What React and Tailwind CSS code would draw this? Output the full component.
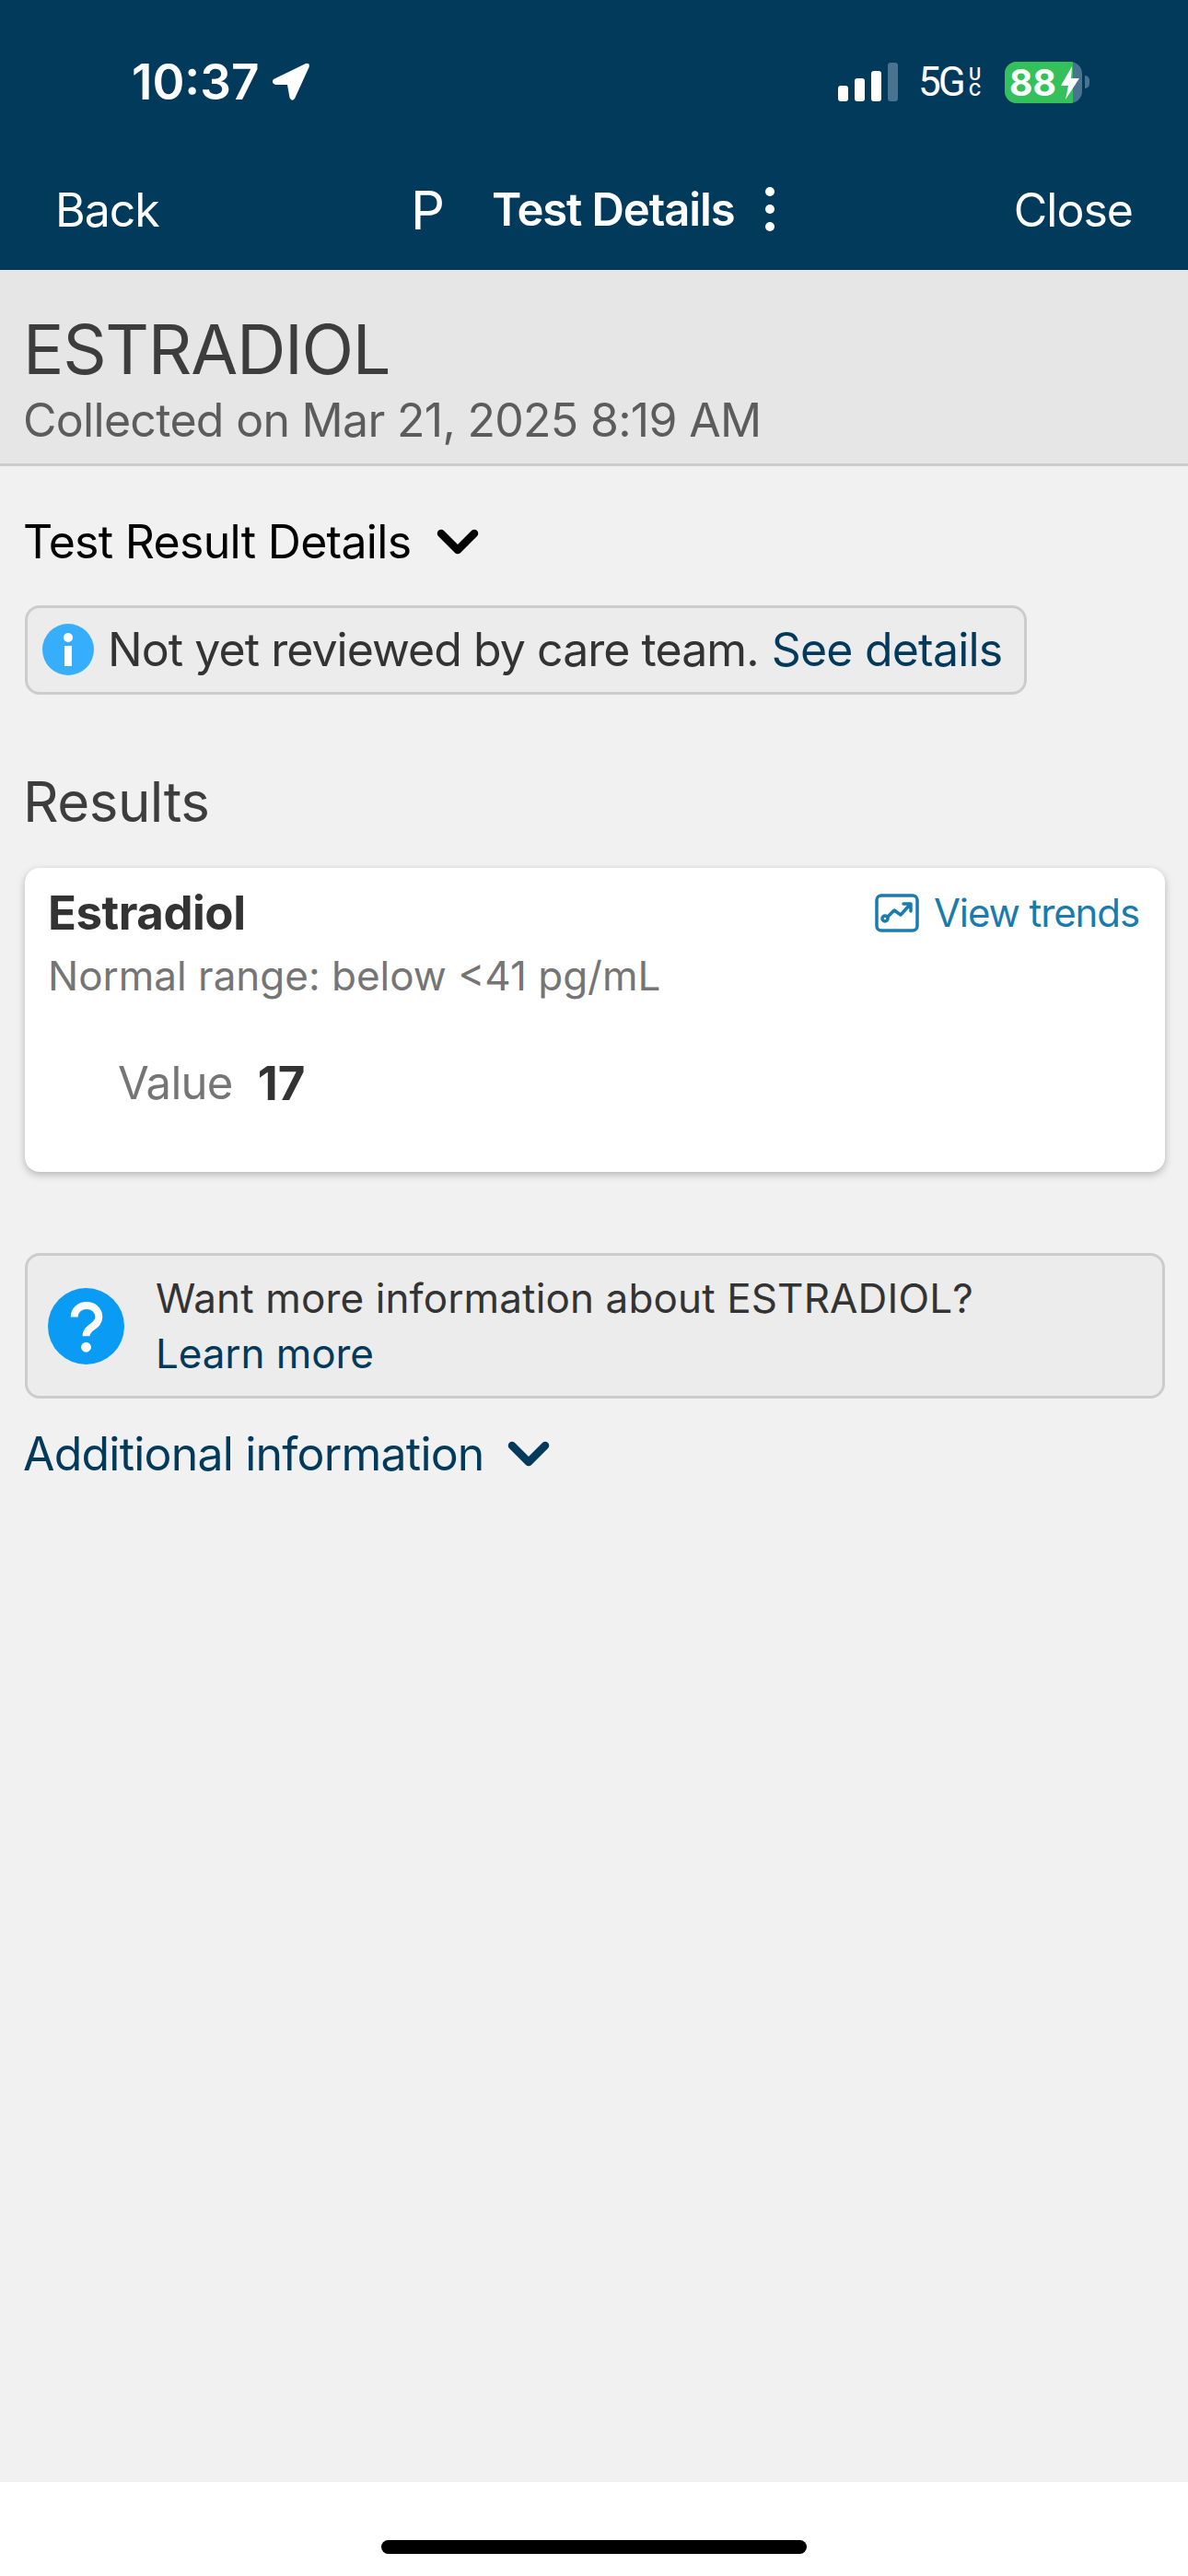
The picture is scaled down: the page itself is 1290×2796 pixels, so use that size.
import React from 'react';

const font = { fontFamily: 'Inter, "Noto Sans", sans-serif' };

const Chevron = ({ className }) => (
    <svg viewBox="0 0 46 28" className={className} fill="none" stroke="currentColor" strokeWidth="8.5" strokeLinecap="round" strokeLinejoin="round">
        <path d="M5 5 L23 23 L41 5" />
    </svg>
);

const StatusBar = () => (
    <div className="flex h-[178px] items-center pl-[143px] text-white">
        <span className="w-[152px] text-[53px] leading-none font-semibold">10:37</span>
        <svg viewBox="0 0 42 42" className="h-[42px] w-[42px]" fill="white">
            <path d="M2 18 L37 1 Q42 0 40.5 5 L25 39 Q22 43 19.500 38 L17 24 L4 24 Q-1 22 2 18 Z" />
        </svg>
        {/* signal */}
        <svg viewBox="0 0 66 42" className="ml-[573px] h-[42px] w-[66px]">
            <rect x="0" y="25" width="11" height="17" rx="3" fill="white" />
            <rect x="18" y="17" width="11" height="25" rx="3" fill="white" />
            <rect x="36" y="9" width="11" height="33" rx="3" fill="white" />
            <rect x="54" y="0" width="11" height="42" rx="3" fill="#4a7291" />
        </svg>
        <span className="ml-[21px] w-[55px] font-['Roboto'] text-[44px] leading-none font-normal tracking-[-3px]">5G</span>
        <span className="flex w-[39px] flex-col text-[18px] leading-[17px] font-semibold">
            <span>U</span>
            <span>C</span>
        </span>
        {/* battery */}
        <div className="relative flex h-[45px] w-[84px] overflow-hidden rounded-[13px] bg-[#4a7291]">
            <div className="h-full w-[74px] bg-[#34c15c]" />
            <span className="absolute top-[3px] left-[5px] text-[39px] leading-[39px] font-bold">88</span>
            <svg viewBox="0 0 20 36" className="absolute top-[5px] left-[61px] h-[36px] w-[20px]" fill="white">
                <path d="M12 0 L0 21 L8 21 L5 36 L20 13 L11 13 Z" />
            </svg>
        </div>
        <div className="ml-[3px] h-[14px] w-[5px] rounded-r-full bg-[#4a7291]" />
    </div>
);

const NavBar = () => (
    <div className="flex h-[115px] items-start pt-[20px] pr-[60px] pl-[60px] text-[50px] leading-[60px] tracking-[-1px] text-white">
        <span className="w-[386px]">Back</span>
        <span className="w-[88px] text-[58px]">P</span>
        <span className="text-[49px] font-semibold tracking-[-1.1px]">Test Details</span>
        <svg viewBox="0 0 14 50" className="mt-[4px] ml-[32px] h-[50px] w-[14px]" fill="white">
            <circle cx="7" cy="6" r="5" />
            <circle cx="7" cy="25" r="5" />
            <circle cx="7" cy="44" r="5" />
        </svg>
        <span className="ml-auto">Close</span>
    </div>
);

export default function App() {
    return (
        <div className="flex h-[2796px] w-[1290px] flex-col overflow-hidden bg-[#f1f1f1]" style={font}>
            <div className="bg-[#023a5c]">
                <StatusBar />
                <NavBar />
            </div>

            {/* Title band */}
            <div className="h-[213px] border-b-[3px] border-[#cccccc] bg-[#e6e6e6] px-[25px] pt-[42px]">
                <h1 className="text-[74px] leading-[88px] font-normal tracking-[-1.3px] text-[#3d3d3d]">ESTRADIOL</h1>
                <p className="mt-[3px] text-[50px] leading-[60px] tracking-[-0.7px] text-[#5c5c5c]">Collected on Mar 21, 2025 8:19 AM</p>
            </div>

            <div className="flex flex-1 flex-col px-[25px]">
                <div className="mt-[52px] flex items-center text-[50px] leading-[60px] tracking-[-0.7px] text-black">
                    Test Result Details
                    <Chevron className="ml-[28px] h-[28px] w-[46px]" />
                </div>

                <div className="mt-[39px] ml-[2px] flex h-[97px] w-[1088px] items-center rounded-[16px] border-[3px] border-[#cccccc] bg-[#ececec] pb-[2px] pl-[16px] text-[50px] leading-[60px] tracking-[-0.95px] whitespace-nowrap text-[#333333]">
                    <svg viewBox="0 0 56 56" className="h-[56px] w-[56px] shrink-0">
                        <circle cx="28" cy="28" r="28" fill="#36aefb" />
                        <circle cx="28" cy="15" r="5" fill="white" />
                        <rect x="24" y="24" width="8" height="22" fill="white" />
                    </svg>
                    <span className="ml-[15px]">Not yet reviewed by care team.</span>
                    <span className="ml-[14px] tracking-[-0.8px] text-[#023a5c]">See details</span>
                </div>

                <h2 className="mt-[80px] text-[60px] leading-[72px] font-normal tracking-[-0.5px] text-[#3d3d3d]">Results</h2>

                <div className="mt-[36px] ml-[2px] h-[330px] rounded-[16px] bg-white pt-[19px] pr-[28px] pl-[25px] shadow-[0_3px_8px_rgba(0,0,0,0.25)]">
                    <div className="flex items-center justify-between">
                        <span className="text-[51px] leading-[60px] font-bold tracking-[-0.5px] text-[#333333]">Estradiol</span>
                        <span className="flex items-center text-[42px] leading-[60px] tracking-[-1.1px] text-[#1a7bad]">
                            <svg viewBox="0 0 48 42" className="h-[42px] w-[48px]" fill="none" stroke="currentColor" strokeWidth="3.5" strokeLinecap="round" strokeLinejoin="round">
                                <rect x="2" y="2" width="44" height="38" rx="5" />
                                <circle cx="11" cy="27" r="3" />
                                <path d="M14 25 L21 18 L28 23 L38 12 M31 11 L39 11 L39 19" />
                            </svg>
                            <span className="ml-[16px]">View trends</span>
                        </span>
                    </div>
                    <p className="mt-[8px] text-[44px] leading-[60px] text-[#757575]">Normal range: below &lt;41 pg/mL</p>
                    <div className="mt-[57px] flex items-center pl-[76px] text-[49px] leading-[60px]">
                        <span className="tracking-[-0.7px] text-[#757575]">Value</span>
                        <span className="ml-[27px] text-[51px] font-bold text-[#333333]">17</span>
                    </div>
                </div>

                <div className="mt-[88px] ml-[2px] flex h-[158px] items-center rounded-[16px] border-[3px] border-[#cccccc] bg-[#ececec] pl-[22px]">
                    <svg viewBox="0 0 84 84" className="h-[83px] w-[83px] shrink-0">
                        <circle cx="42" cy="42" r="42" fill="#0a9cf5" />
                        <path d="M29 32 C29 15 56 15 56 32 C56 43 42 42 42 53" fill="none" stroke="white" strokeWidth="8" />
                        <circle cx="42" cy="65" r="5.500" fill="white" />
                    </svg>
                    <div className="ml-[34px] text-[44px] leading-[60px] tracking-[0.13px] text-[#333333]">
                        <p>Want more information about ESTRADIOL?</p>
                        <p className="tracking-[-0.1px] text-[#023a5c]">Learn more</p>
                    </div>
                </div>

                <div className="mt-[30px] flex items-center text-[50px] leading-[60px] tracking-[-0.8px] text-[#023a5c]">
                    Additional information
                    <Chevron className="ml-[25px] h-[28px] w-[46px]" />
                </div>
            </div>

            {/* Home indicator */}
            <div className="flex h-[102px] items-start justify-center bg-white pt-[63px]">
                <div className="h-[15px] w-[462px] rounded-full bg-black" />
            </div>
        </div>
    );
}
